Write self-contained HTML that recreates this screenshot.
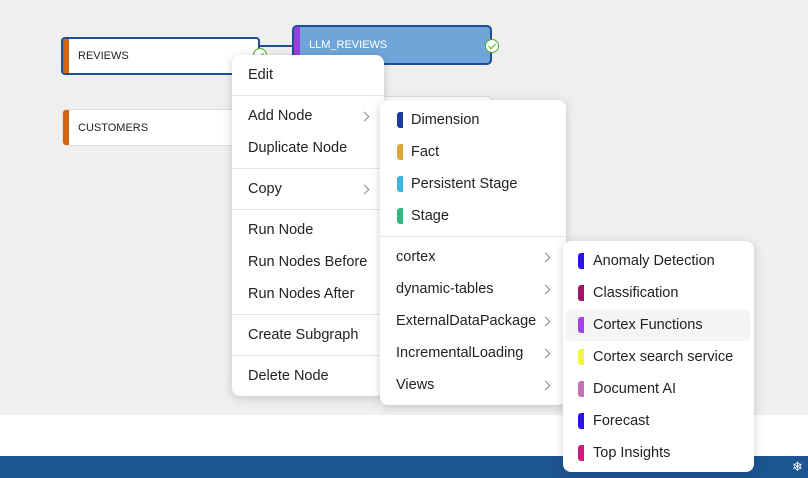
<!DOCTYPE html><html><head><style>
*{box-sizing:border-box;margin:0;padding:0}
body{width:808px;height:478px;overflow:hidden;background:#efefef;font-family:"Liberation Sans",sans-serif;position:relative}
.a{position:absolute}
.node{position:absolute;background:#fff;border-radius:4px;font-size:11px;color:#222;padding-left:15px;display:flex;align-items:center;overflow:hidden}
.menu{position:absolute;background:#fff;border-radius:8px;box-shadow:0 2px 10px rgba(0,0,0,.18);font-size:14.5px;color:#222}
.it{position:absolute;left:0;right:0;height:32px;display:flex;align-items:center}
.dv{position:absolute;left:0;right:0;height:1px;background:#e6e6e6}
.ch{position:absolute;width:6px;height:16px;border-radius:3px 0 0 3px}
.chev{position:absolute;width:7px;height:7px;border:solid #888;border-width:1px 1px 0 0;transform:rotate(45deg)}
.ck{position:absolute;width:14px;height:14px;border-radius:50%;background:#fff;border:1.5px solid #4caf2a}
.ck:after{content:"";position:absolute;left:3.5px;top:1.5px;width:3px;height:6px;border:solid #4caf2a;border-width:0 1.5px 1.5px 0;transform:rotate(45deg)}
</style></head><body>
<div class="a" style="left:0;top:415px;width:808px;height:41px;background:#fff"></div>
<div class="a" style="left:0;top:456px;width:808px;height:22px;background:#1d5592"></div>
<div class="a" style="left:792px;top:459px;color:#fff;font-size:13px">❄</div>
<div class="a" style="left:258px;top:45px;width:36px;height:2px;background:#1e4f95"></div>
<div class="node" style="left:61px;top:37px;width:199px;height:38px;border:2px solid #1e4f95"><div class="a" style="left:0;top:0;bottom:0;width:6px;background:#d4620a"></div>REVIEWS</div>
<div class="ck" style="left:253px;top:48px"></div>
<div class="node" style="left:292px;top:25px;width:200px;height:40px;border:2px solid #1e4f95;background:#6fa5d9;color:#fff;border-radius:5px"><div class="a" style="left:0;top:0;bottom:0;width:6px;background:#9b3ee0"></div>LLM_REVIEWS</div>
<div class="ck" style="left:485px;top:39px"></div>
<div class="node" style="left:62px;top:109px;width:200px;height:37px;border:1px solid #ddd"><div class="a" style="left:0;top:0;bottom:0;width:6px;background:#d4620a"></div>CUSTOMERS</div>
<div class="a" style="left:380px;top:96px;width:112px;height:40px;background:#fff;border-radius:5px;border:1px solid #ddd"></div>

<div class="menu" style="left:232px;top:55px;width:152px;height:341px">
<div class="it" style="top:4px;padding-left:16px">Edit</div>
<div class="dv" style="top:40px"></div>
<div class="it" style="top:45px;padding-left:16px">Add Node</div><div class="chev" style="left:129px;top:58px"></div>
<div class="it" style="top:77px;padding-left:16px">Duplicate Node</div>
<div class="dv" style="top:113px"></div>
<div class="it" style="top:118px;padding-left:16px">Copy</div><div class="chev" style="left:129px;top:131px"></div>
<div class="dv" style="top:154px"></div>
<div class="it" style="top:159px;padding-left:16px">Run Node</div>
<div class="it" style="top:191px;padding-left:16px">Run Nodes Before</div>
<div class="it" style="top:223px;padding-left:16px">Run Nodes After</div>
<div class="dv" style="top:259px"></div>
<div class="it" style="top:264px;padding-left:16px">Create Subgraph</div>
<div class="dv" style="top:300px"></div>
<div class="it" style="top:305px;padding-left:16px">Delete Node</div>
</div>

<div class="menu" style="left:380px;top:100px;width:186px;height:305px">
<div class="ch" style="left:17px;top:12px;background:#1a3a9c"></div><div class="it" style="top:4px;padding-left:31px">Dimension</div>
<div class="ch" style="left:17px;top:44px;background:#dba73a"></div><div class="it" style="top:36px;padding-left:31px">Fact</div>
<div class="ch" style="left:17px;top:76px;background:#3cb6de"></div><div class="it" style="top:68px;padding-left:31px">Persistent Stage</div>
<div class="ch" style="left:17px;top:108px;background:#2fba7e"></div><div class="it" style="top:100px;padding-left:31px">Stage</div>
<div class="dv" style="top:136px"></div>
<div class="it" style="top:141px;padding-left:16px">cortex</div><div class="chev" style="left:162px;top:154px"></div>
<div class="it" style="top:173px;padding-left:16px">dynamic-tables</div><div class="chev" style="left:162px;top:186px"></div>
<div class="it" style="top:205px;padding-left:16px">ExternalDataPackage</div><div class="chev" style="left:162px;top:218px"></div>
<div class="it" style="top:237px;padding-left:16px">IncrementalLoading</div><div class="chev" style="left:162px;top:250px"></div>
<div class="it" style="top:269px;padding-left:16px">Views</div><div class="chev" style="left:162px;top:282px"></div>
</div>

<div class="menu" style="left:563px;top:241px;width:191px;height:231px">
<div class="a" style="left:3px;top:68px;width:184px;height:32px;background:#f5f5f5;border-radius:4px"></div>
<div class="ch" style="left:15px;top:12px;background:#2a10f5"></div><div class="it" style="top:4px;padding-left:30px">Anomaly Detection</div>
<div class="ch" style="left:15px;top:44px;background:#a3136a"></div><div class="it" style="top:36px;padding-left:30px">Classification</div>
<div class="ch" style="left:15px;top:76px;background:#a63ef0"></div><div class="it" style="top:68px;padding-left:30px">Cortex Functions</div>
<div class="ch" style="left:15px;top:108px;background:#f2f53a"></div><div class="it" style="top:100px;padding-left:30px">Cortex search service</div>
<div class="ch" style="left:15px;top:140px;background:#c472b8"></div><div class="it" style="top:132px;padding-left:30px">Document AI</div>
<div class="ch" style="left:15px;top:172px;background:#2a10f5"></div><div class="it" style="top:164px;padding-left:30px">Forecast</div>
<div class="ch" style="left:15px;top:204px;background:#d0187e"></div><div class="it" style="top:196px;padding-left:30px">Top Insights</div>
</div>
</body></html>
